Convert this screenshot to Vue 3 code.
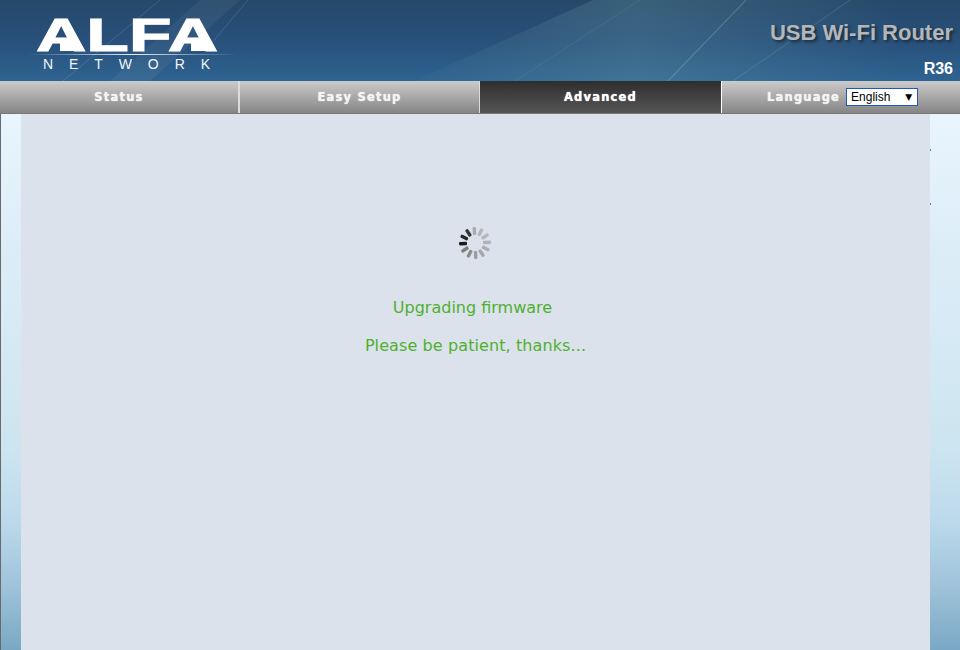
<script setup>
import { ref } from 'vue';

const tabs = [
  { name: 'Status', width: 240, cls: 'first' },
  { name: 'Easy Setup', width: 240 },
  { name: 'Advanced', width: 242, cls: 'active' },
];
const lang = ref('English');

// spokes of the busy indicator, darkest one points left
const spokes = Array.from({ length: 12 }, (_, i) => ({
  angle: i * 30 - 3,
  color: ['#a9abae', '#b4b6ba', '#b4b6ba', '#b0b2b6', '#abadb1', '#a4a6aa', '#9a9ca0', '#8a8c8f', '#7c7e80', '#1a1a1a', '#262626', '#333435'][i],
}));
</script>

<template>
  <div class="page">
    <header class="banner">
      <svg class="streaks" width="960" height="81" viewBox="0 0 960 81">
        <defs>
          <linearGradient id="band" gradientUnits="userSpaceOnUse" x1="420" y1="0" x2="900" y2="0">
            <stop offset="0" stop-color="#7fb0b0" stop-opacity="0.04" />
            <stop offset="0.45" stop-color="#7fb0b0" stop-opacity="0.22" />
            <stop offset="1" stop-color="#7fb0b0" stop-opacity="0" />
          </linearGradient>
          <linearGradient id="rule">
            <stop offset="0" stop-color="#fff" stop-opacity="0" />
            <stop offset="0.5" stop-color="#fff" stop-opacity="0.9" />
            <stop offset="1" stop-color="#fff" stop-opacity="0" />
          </linearGradient>
        </defs>
        <polygon points="414,81 593,0 960,0 960,81" fill="url(#band)" />
        <polygon points="110,81 200,0 240,0 150,81" fill="#fff" opacity="0.05" />
        <line x1="63" y1="81" x2="160" y2="0" stroke="#acd" stroke-width="1" opacity="0.18" />
        <line x1="210" y1="45" x2="248" y2="0" stroke="#acd" stroke-width="1" opacity="0.18" />
        <line x1="515" y1="81" x2="640" y2="0" stroke="#acd" stroke-width="1" opacity="0.1" />
        <line x1="668" y1="81" x2="746" y2="0" stroke="#acd" stroke-width="1.2" opacity="0.25" />
        <line x1="733" y1="81" x2="850" y2="0" stroke="#acd" stroke-width="1" opacity="0.18" />
      </svg>
      <div class="logo">
        <svg width="210" height="72" viewBox="0 -10 210 72">
          <text x="9" y="41" class="logo-big" textLength="182" lengthAdjust="spacingAndGlyphs">ALFA</text>
          <polygon points="33,32 48,32 53,41 33,41" fill="#fff" />
          <polygon points="164,32 179,32 184,41 164,41" fill="#fff" />
          <rect x="0" y="44" width="210" height="1" fill="url(#rule)" />
          <text x="16" y="59" class="logo-small" textLength="167">NETWORK</text>
        </svg>
      </div>
      <div class="product">
        <div class="title">USB Wi-Fi Router</div>
        <div class="model">R36</div>
      </div>
    </header>

    <nav class="menu">
      <a v-for="t in tabs" :key="t.name" class="tab" :class="t.cls" :style="{ width: t.width + 'px' }">{{ t.name }}</a>
      <div class="tab lang-cell">
        <span>Language</span>
        <div class="lang-box">
          <select v-model="lang">
            <option>English</option>
          </select>
          <span class="arrow">▼</span>
        </div>
      </div>
    </nav>

    <main class="body">
      <div class="side left"></div>
      <section class="content">
        <svg class="spinner" width="34" height="34" viewBox="-17 -17 34 34">
          <rect
            v-for="s in spokes"
            :key="s.angle"
            x="-1.7"
            y="-16"
            width="3.4"
            height="8"
            rx="1.2"
            :fill="s.color"
            :transform="`rotate(${s.angle})`"
          />
        </svg>
        <p class="msg first">Upgrading firmware</p>
        <p class="msg second">Please be patient, thanks...</p>
      </section>
      <div class="side right">
        <i class="tick" style="top: 35px"></i>
        <i class="tick" style="top: 89px"></i>
      </div>
    </main>
  </div>
</template>

<style>
html,
body {
  margin: 0;
  overflow: hidden;
}
</style>

<style scoped>
.page {
  width: 960px;
  height: 650px;
  display: flex;
  flex-direction: column;
  overflow: hidden;
  font-family: "Liberation Sans", Arial, sans-serif;
}

.banner {
  position: relative;
  height: 81px;
  flex: none;
  display: flex;
  justify-content: space-between;
  background: linear-gradient(180deg, #26496a 0%, #28507a 50%, #2e6391 100%);
}

.streaks {
  position: absolute;
  left: 0;
  top: 0;
}

.logo {
  position: relative;
  margin: 0 0 0 27px;
  width: 210px;
  height: 72px;
}

.logo-big {
  font: bold 47px "Liberation Sans", sans-serif;
  fill: #fff;
  stroke: #fff;
  stroke-width: 1px;
}

.logo-small {
  font: 14px "Liberation Sans", sans-serif;
  fill: #f2f6fa;
}

.product {
  position: relative;
  display: flex;
  flex-direction: column;
  align-items: flex-end;
  padding: 20px 7px 0 0;
}

.title {
  font-size: 22px;
  line-height: 25px;
  font-weight: bold;
  color: #b4b6b8;
  text-shadow: 2px 2px 3px #1a2c3c;
}

.model {
  margin-top: 15px;
  font-size: 16px;
  line-height: 18px;
  font-weight: bold;
  color: #fff;
}

.menu {
  display: flex;
  height: 33px;
  flex: none;
  box-sizing: border-box;
  border-bottom: 1px solid #777;
  background: linear-gradient(180deg, #cbcbcb 0%, #858585 100%);
}

.tab {
  box-sizing: border-box;
  display: flex;
  align-items: center;
  justify-content: center;
  height: 32px;
  border-right: 1px solid #dcdcdc;
  font-family: "DejaVu Sans", sans-serif;
  font-size: 11.5px;
  font-weight: bold;
  letter-spacing: 1.2px;
  color: #f4f4f4;
  text-shadow: 0 0 1px #fff;
}

.tab.first {
  border-right-width: 2px;
}

.tab.active {
  border-right-color: #fff;
  background: linear-gradient(180deg, #2e2e2e 0%, #555 100%);
  color: #fff;
}

.lang-cell {
  flex: 1;
  gap: 6px;
  justify-content: flex-start;
  border-right: none;
  padding-left: 45px;
}

.lang-box {
  position: relative;
  width: 72px;
  height: 18px;
}

select {
  appearance: none;
  width: 72px;
  height: 18px;
  box-sizing: border-box;
  border: 1px solid #2456c0;
  border-radius: 0;
  padding: 0 0 0 4px;
  background: #fff;
  color: #000;
  font: 12px "Liberation Sans", sans-serif;
  outline: none;
}

.arrow {
  position: absolute;
  right: 6px;
  top: 3px;
  font-size: 9px;
  line-height: 12px;
  letter-spacing: 0;
  color: #000;
  text-shadow: none;
  pointer-events: none;
}

.body {
  flex: 1;
  display: flex;
  min-height: 0;
}

.side {
  position: relative;
  background: linear-gradient(180deg, #e9f5fd 0%, #dfeef9 20%, #cde5f0 62%, #bcd9ec 76%, #9fc3da 88%, #7aa8c4 100%);
}

.side.left {
  width: 20px;
  border-left: 1px solid #6a6a6a;
}

.side.right {
  width: 30px;
}

.tick {
  position: absolute;
  left: 0;
  width: 1px;
  height: 2px;
  background: #5b82d0;
}

.content {
  flex: 1;
  display: flex;
  flex-direction: column;
  align-items: center;
  padding-top: 112px;
  background: #dce2ec;
}

.spinner {
  display: block;
  margin-right: 2px;
  margin-bottom: 37px;
}

.msg {
  margin: 0 0 17px;
  font-family: "DejaVu Sans", sans-serif;
  font-size: 16px;
  line-height: 21px;
  color: #4fb02f;
}

.msg.first {
  margin-right: 6px;
}

.msg.second {
  letter-spacing: 0.1px;
}
</style>
